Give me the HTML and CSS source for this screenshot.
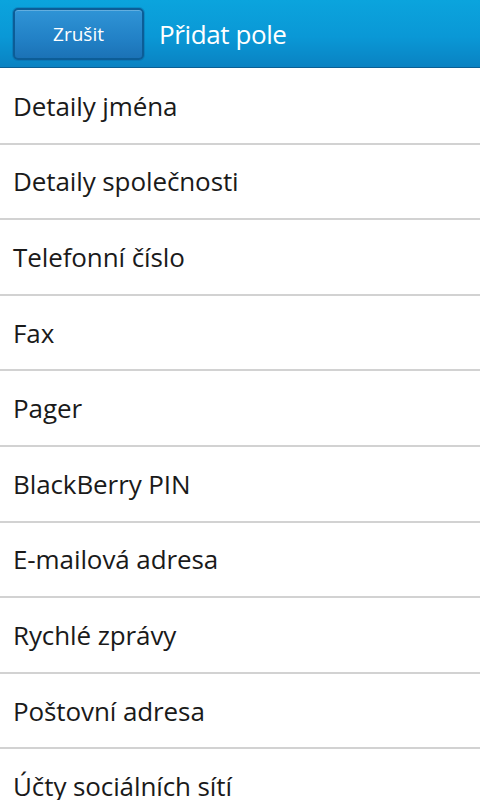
FILE: index.html
```html
<!DOCTYPE html>
<html lang="cs">
<head>
<meta charset="utf-8">
<title>Přidat pole</title>
<link rel="stylesheet" href="styles.css">
</head>
<body>
<header class="titlebar">
  <button class="btn-cancel">Zrušit</button>
  <h1 class="title">Přidat pole</h1>
</header>
<ul class="list">
  <li class="item">Detaily jména</li>
  <li class="item">Detaily společnosti</li>
  <li class="item">Telefonní číslo</li>
  <li class="item">Fax</li>
  <li class="item">Pager</li>
  <li class="item">BlackBerry PIN</li>
  <li class="item">E-mailová adresa</li>
  <li class="item">Rychlé zprávy</li>
  <li class="item">Poštovní adresa</li>
  <li class="item">Účty sociálních sítí</li>
</ul>
</body>
</html>
```
FILE: styles.css
```css
html, body {
  margin: 0;
  padding: 0;
  background: #ffffff;
  width: 480px;
  height: 800px;
  overflow: hidden;
  font-family: "Open Sans", "Noto Sans", sans-serif;
}
.titlebar {
  height: 68px;
  box-sizing: border-box;
  display: flex;
  align-items: center;
  padding: 0 0 0 13px;
  gap: 15px;
  background: linear-gradient(to bottom, #0ba4dd 0%, #0a98d6 55%, #0a82c2 100%);
  border-bottom: 1px solid #0b5f94;
}
.btn-cancel {
  width: 131px;
  height: 52px;
  box-sizing: border-box;
  border: 2px solid #0c5d97;
  border-radius: 5px;
  background: linear-gradient(to bottom, #2f94d6 0%, #2281c6 60%, #1b72b6 100%);
  box-shadow: inset 0 1px 0 rgba(255,255,255,0.25), 0 0 0 1px rgba(10,90,150,0.3);
  color: #ffffff;
  font-family: "Open Sans", "Noto Sans", sans-serif;
  font-size: 19px;
  padding: 0;
}
.title {
  margin: 0;
  font-weight: normal;
  color: #ffffff;
  font-size: 26px;
  letter-spacing: -0.4px;
}
.list {
  list-style: none;
  margin: 0;
  padding: 0;
  margin-top: 1px;
}
.item {
  height: 73.6px;
  box-sizing: content-box;
  border-bottom: 2px solid #d2d2d2;
  display: flex;
  align-items: center;
  padding-left: 13px;
  font-size: 26px;
  color: #1a1a1a;
  letter-spacing: -0.1px;
}
```
